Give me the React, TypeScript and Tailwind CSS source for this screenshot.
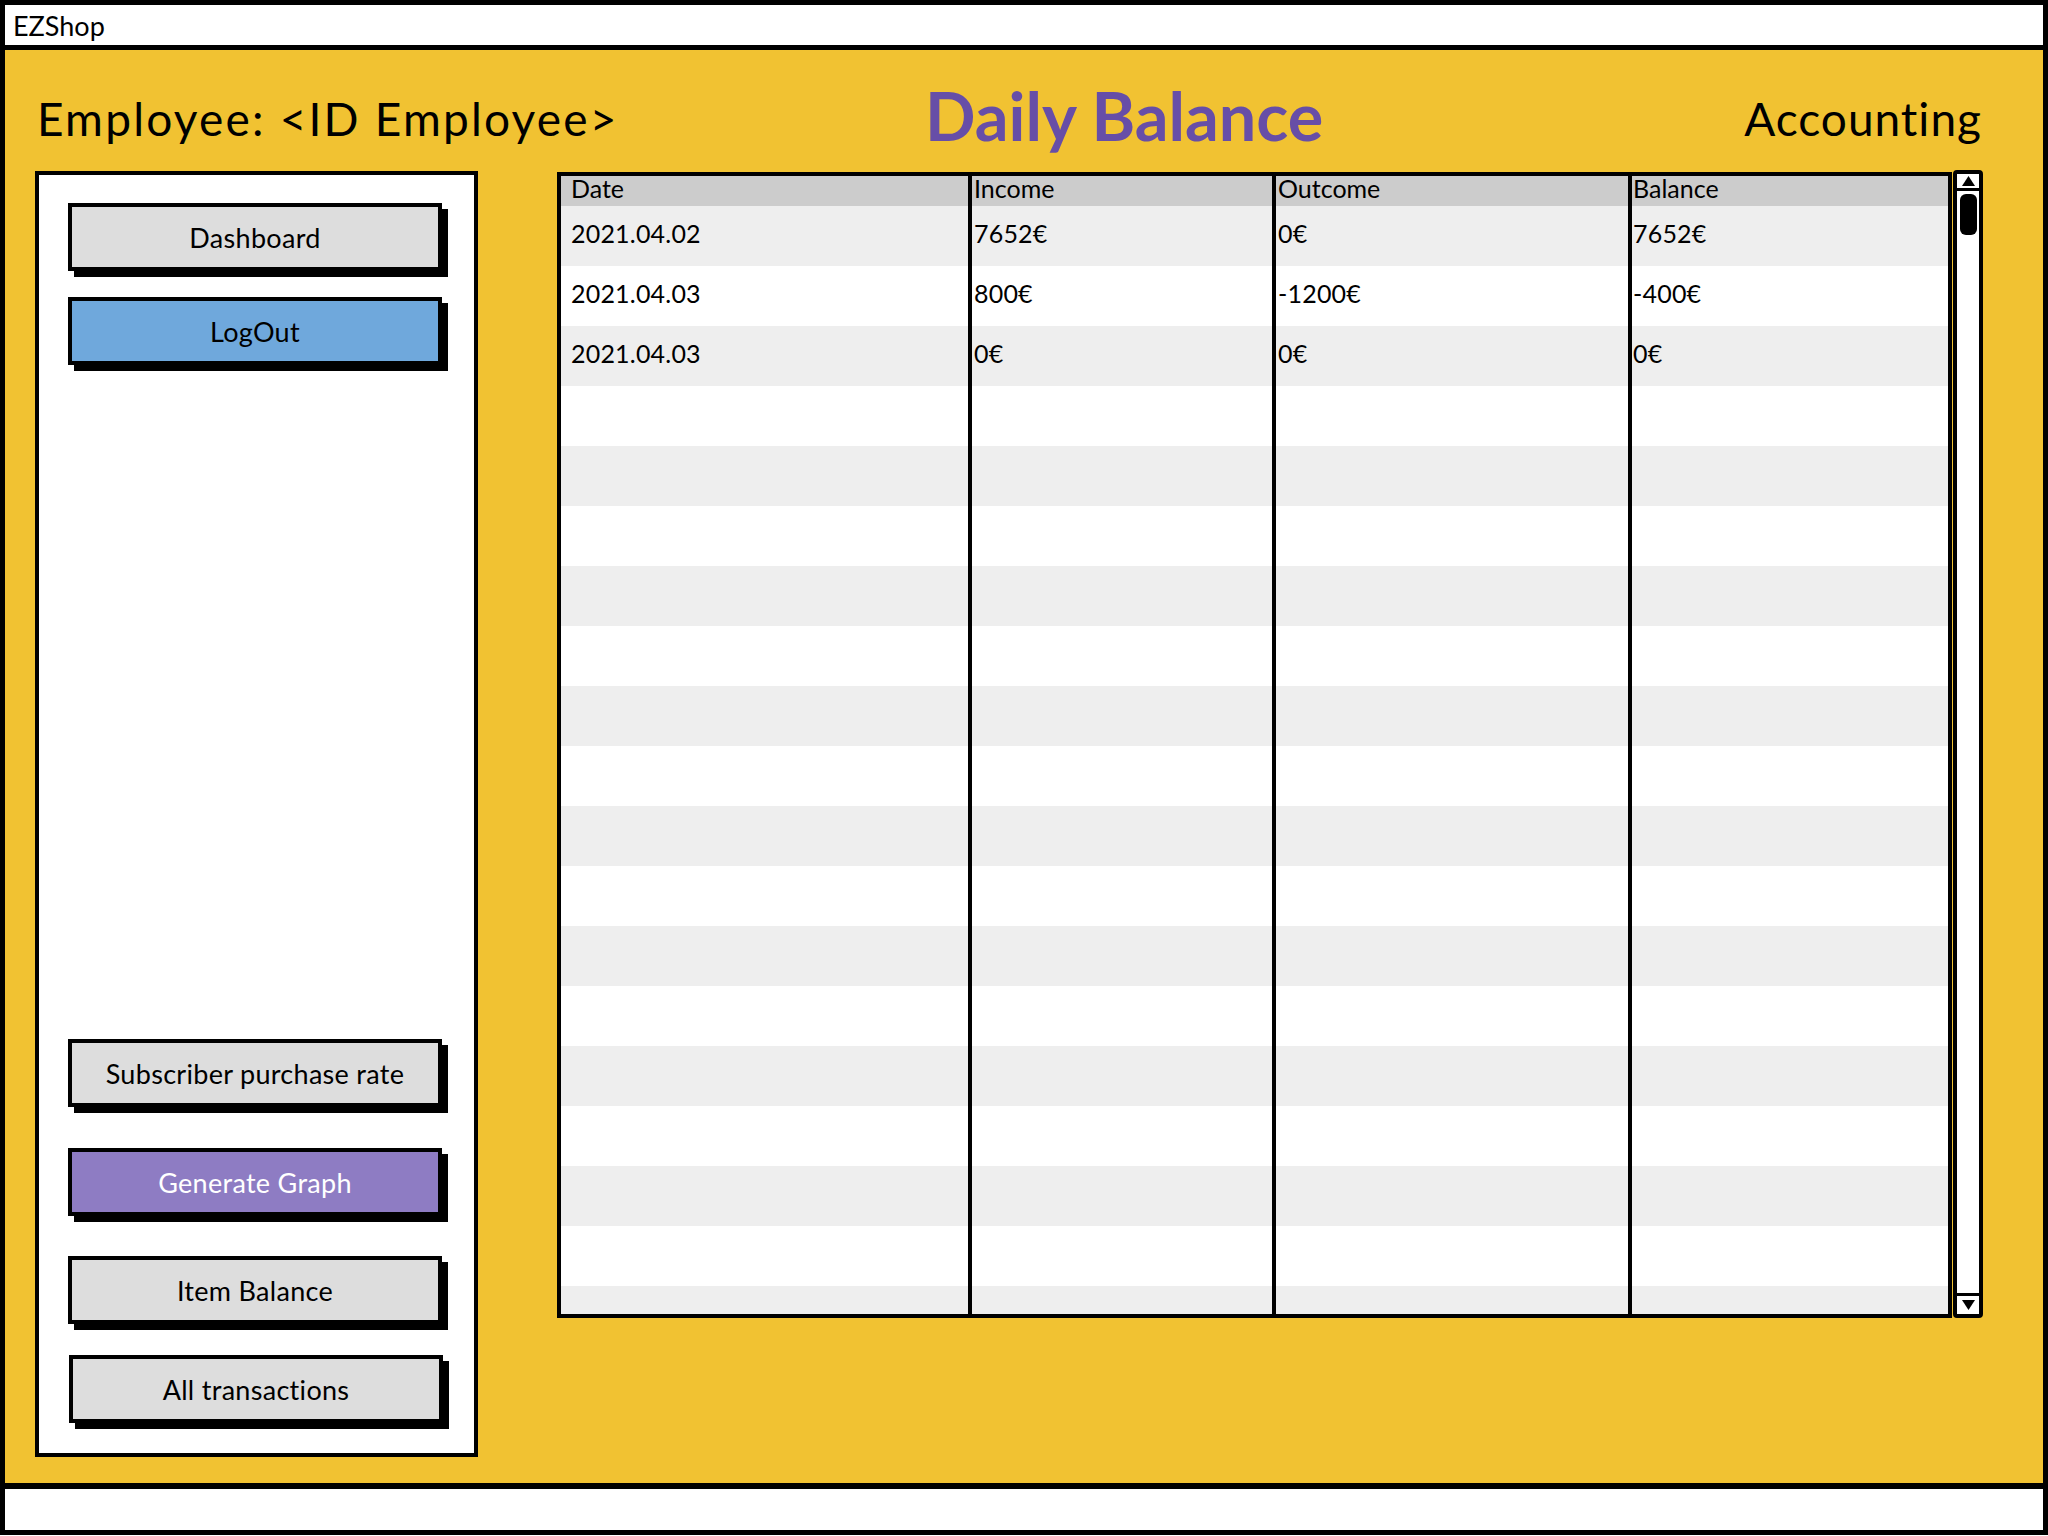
import React from "react";

const data: string[][] = [
  ["2021.04.02", "7652€", "0€", "7652€"],
  ["2021.04.03", "800€", "-1200€", "-400€"],
  ["2021.04.03", "0€", "0€", "0€"],
];
const ROWS = 19;
const rows: string[][] = Array.from({ length: ROWS }, (_, i) => data[i] ?? ["", "", "", ""]);

const columns = [
  { title: "Date", cls: "w-[407px]", pad: "pl-[10px]" },
  { title: "Income", cls: "w-[304px] border-l-[4px] border-black", pad: "pl-[2px]" },
  { title: "Outcome", cls: "w-[356px] border-l-[4px] border-black", pad: "pl-[2px]" },
  { title: "Balance", cls: "w-[320px] border-l-[4px] border-black", pad: "pl-[1px]" },
];

function SideButton({
  label,
  tone = "gray",
  className = "",
}: {
  label: string;
  tone?: "gray" | "blue" | "purple";
  className?: string;
}) {
  const bg =
    tone === "blue" ? "bg-[#6fa8dc] text-black" : tone === "purple" ? "bg-[#8e7cc3] text-white" : "bg-[#dddddd] text-black";
  return (
    <div
      className={`w-[374px] h-[68px] shrink-0 border-[4px] border-black shadow-[6px_6px_0_0_#000] flex items-center justify-center text-[27px] tracking-[0.3px] leading-none ${bg} ${className}`}
    >
      {label}
    </div>
  );
}

function Triangle({ up }: { up: boolean }) {
  return (
    <svg width="13" height="10" viewBox="0 0 13 10">
      {up ? <polygon points="6.5,0 13,10 0,10" fill="#000" /> : <polygon points="0,0 13,0 6.5,10" fill="#000" />}
    </svg>
  );
}

export default function App() {
  return (
    <div className="w-[2048px] h-[1536px] bg-white font-['Lato',sans-serif] text-black">
      <div className="w-[2048px] h-[1535px] border-[5px] border-black flex flex-col">
        {/* title bar */}
        <div className="h-[40px] shrink-0 flex items-center pl-[8px] text-[27px] leading-none">EZShop</div>
        {/* main */}
        <div className="h-[1444px] shrink-0 border-t-[5px] border-b-[6px] border-black bg-[#f1c232] flex flex-col">
          {/* header */}
          <div className="h-[121px] shrink-0 flex items-start pt-[40px] pl-[32px] pr-[61px]">
            <div className="w-[891px] shrink-0 text-[46px] leading-[58px] tracking-[2.2px]">{"Employee: <ID Employee>"}</div>
            <div className="-ml-[3px] text-[66.5px] leading-[58px] font-bold text-[#674ea7] -mt-[4px]">Daily Balance</div>
            <div className="ml-auto text-[46px] leading-[58px] tracking-[1px]">Accounting</div>
          </div>
          {/* content */}
          <div className="flex items-start pl-[30px]">
            {/* sidebar */}
            <div className="w-[443px] h-[1286px] shrink-0 border-[4px] border-black bg-white flex flex-col pl-[29px]">
              <SideButton label="Dashboard" className="mt-[28px]" />
              <SideButton label="LogOut" tone="blue" className="mt-[26px]" />
              <SideButton label="Subscriber purchase rate" className="mt-auto" />
              <SideButton label="Generate Graph" tone="purple" className="mt-[41px]" />
              <SideButton label="Item Balance" className="mt-[40px]" />
              <SideButton label="All transactions" className="mt-[31px] mb-[30px] ml-[1px]" />
            </div>
            {/* table */}
            <div className="ml-[79px] mt-[1px] w-[1395px] h-[1146px] shrink-0 border-[4px] border-black bg-white flex overflow-hidden">
              {columns.map((col, ci) => (
                <div key={col.title} className={`${col.cls} shrink-0 flex flex-col`}>
                  <div className={`h-[30px] shrink-0 bg-[#cccccc] text-[25px] leading-[25px] ${col.pad}`}>{col.title}</div>
                  {rows.map((r, ri) => (
                    <div
                      key={ri}
                      className={`h-[60px] shrink-0 flex items-center pb-[5px] text-[25px] tracking-[0.2px] leading-none ${col.pad} ${
                        ri % 2 === 0 ? "bg-[#eeeeee]" : "bg-white"
                      }`}
                    >
                      {r[ci]}
                    </div>
                  ))}
                </div>
              ))}
            </div>
            {/* scrollbar */}
            <div className="ml-[1px] -mt-[1px] w-[30px] h-[1148px] shrink-0 border-[4px] border-black rounded-[4px] bg-white flex flex-col">
              <div className="h-[17px] shrink-0 border-b-[3px] border-black flex items-center justify-center">
                <Triangle up />
              </div>
              <div className="mt-[3px] ml-[3px] w-[17px] h-[41px] bg-black rounded-[6px]" />
              <div className="flex-1" />
              <div className="h-[21px] shrink-0 border-t-[3px] border-black flex items-center justify-center">
                <Triangle up={false} />
              </div>
            </div>
          </div>
        </div>
        {/* footer */}
        <div className="h-[40px] shrink-0 bg-white" />
      </div>
    </div>
  );
}
